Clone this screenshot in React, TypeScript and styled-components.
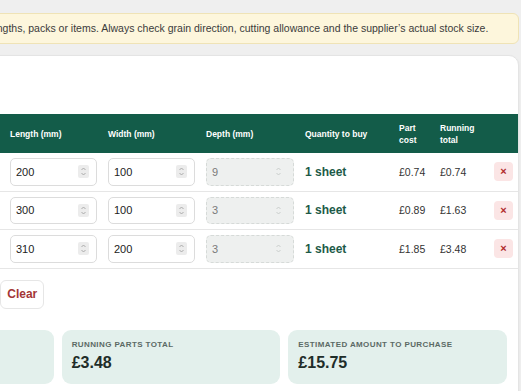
import React from 'react';
import styled, { createGlobalStyle } from 'styled-components';

const GlobalStyle = createGlobalStyle`
  html, body {
    margin: 0;
    padding: 0;
    background: #efefef;
  }
  body {
    font-family: "Liberation Sans", Arial, sans-serif;
    color: #333;
    overflow: hidden;
  }
`;

// the page is shown scrolled to the right, so the left part sits outside the window
const Viewport = styled.div`
  width: 100%;
  overflow: hidden;
`;

const Page = styled.div`
  width: 696px;
  padding: 13px 12px 24px;
  margin-left: -189px;
`;

const Notice = styled.div`
  height: 29px;
  line-height: 29px;
  padding: 0 12px 0 21px;
  background: #fdf6dc;
  border: 1px solid #efe3b6;
  border-radius: 6px;
  font-size: 10.5px;
  color: #3b3b3b;
  white-space: nowrap;
  margin-bottom: 11px;
`;

const Card = styled.section`
  background: #fff;
  border: 1px solid #e4e4e4;
  border-radius: 10px;
  box-shadow: 0 1px 3px rgba(0, 0, 0, 0.05);
  overflow: hidden;
`;

const CardHead = styled.header`
  box-sizing: border-box;
  height: 58px;
  padding: 16px 11px 0;
`;

const Title = styled.h2`
  margin: 0;
  font-size: 15px;
  color: #1f2d29;
`;

const Table = styled.table`
  width: 100%;
  border-collapse: collapse;
  table-layout: fixed;
`;

const Th = styled.th`
  height: 39px;
  padding: 0 8px;
  background: #135c49;
  color: #fff;
  font-size: 8.5px;
  font-weight: 700;
  line-height: 12px;
  text-align: left;
  vertical-align: middle;
`;

const Td = styled.td`
  padding: 5px 3px 5px 8px;
  border-bottom: 1px solid #e6e6e6;
  font-size: 10.5px;
  color: #333;
  vertical-align: middle;
`;

const PartName = styled.span`
  font-size: 11px;
  color: #333;
`;

const Field = styled.label<{ $locked?: boolean }>`
  display: flex;
  align-items: center;
  box-sizing: border-box;
  height: 27.5px;
  padding: 0 ${p => (p.$locked ? 9 : 7)}px 0 5px;
  border: 1px ${p => (p.$locked ? 'dashed #d6dad8' : 'solid #dcdcdc')};
  border-radius: 5px;
  background: ${p => (p.$locked ? '#eef0ef' : '#fff')};
`;

const FieldInput = styled.input<{ $locked?: boolean }>`
  flex: 1;
  min-width: 0;
  border: 0;
  padding: 0;
  background: transparent;
  font-family: inherit;
  font-size: 11px;
  color: ${p => (p.$locked ? '#7a7a7a' : '#222')};
  outline: none;
`;

const Qty = styled.span`
  font-size: 12px;
  font-weight: 700;
  color: #1d5a48;
`;

const RemoveButton = styled.button`
  display: flex;
  align-items: center;
  justify-content: center;
  width: 19px;
  height: 19px;
  padding: 0;
  border: 0;
  border-radius: 4px;
  background: #fbe5e5;
  color: #b02a2a;
  font-family: inherit;
  font-size: 11px;
  font-weight: 700;
  line-height: 1;
`;

const Actions = styled.div`
  display: flex;
  gap: 8px;
  padding: 11px 11px 0;
`;

const Button = styled.button<{ $variant?: 'primary' | 'plain' | 'danger' }>`
  height: 29px;
  padding: 0 ${p => (p.$variant === 'danger' ? 6 : 8)}px;
  border-radius: 6px;
  font-family: inherit;
  font-size: 12px;
  font-weight: 700;
  border: 1px solid ${p => (p.$variant === 'primary' ? '#135c49' : '#e6e6e6')};
  background: ${p => (p.$variant === 'primary' ? '#135c49' : '#fff')};
  color: ${p => (p.$variant === 'primary' ? '#fff' : p.$variant === 'danger' ? '#a33636' : '#1d5a48')};
`;

const Summary = styled.div`
  display: grid;
  grid-template-columns: repeat(3, 1fr);
  gap: 8px;
  padding: 21px 11px 16px;
`;

const Stat = styled.div`
  box-sizing: border-box;
  height: 54px;
  padding: 10px 10px 0;
  border-radius: 9px;
  background: #e3f0ec;
`;

const StatLabel = styled.div`
  font-size: 8px;
  font-weight: 700;
  letter-spacing: 0.4px;
  text-transform: uppercase;
  color: #5b6a65;
  line-height: 10px;
`;

const StatValue = styled.div`
  margin-top: 4px;
  font-size: 16px;
  font-weight: 700;
  line-height: 18px;
  color: #1f2d29;
`;

const Spinner: React.FC<{ faint?: boolean }> = ({ faint }) => (
  <svg width="11" height="13" viewBox="0 0 11 13">
    {!faint && <rect x="0" y="0" width="11" height="13" rx="2" fill="#ececec" />}
    <path
      d="M3.5 5 L5.5 3 L7.5 5 M3.5 8 L5.5 10 L7.5 8"
      fill="none"
      stroke={faint ? '#c4c8c6' : '#a3a3a3'}
      strokeWidth="0.9"
    />
  </svg>
);

interface Part {
  name: string;
  length: number;
  width: number;
  depth: number;
  qty: string;
  cost: string;
  running: string;
}

const parts: Part[] = [
  { name: 'Shelf', length: 200, width: 100, depth: 9, qty: '1 sheet', cost: '£0.74', running: '£0.74' },
  { name: 'Side panel', length: 300, width: 100, depth: 3, qty: '1 sheet', cost: '£0.89', running: '£1.63' },
  { name: 'Back', length: 310, width: 200, depth: 3, qty: '1 sheet', cost: '£1.85', running: '£3.48' }
];

const NumberField: React.FC<{ value: number; locked?: boolean }> = ({ value, locked }) => (
  <Field $locked={locked}>
    <FieldInput $locked={locked} defaultValue={value} readOnly={locked} inputMode="numeric" />
    <Spinner faint={locked} />
  </Field>
);

const App: React.FC = () => (
  <Viewport>
    <GlobalStyle />
    <Page>
      <Notice>
        Estimate only: suppliers sell in lengths, packs or items. Always check grain direction, cutting allowance and the
        supplier’s actual stock size.
      </Notice>
      <Card>
        <CardHead>
          <Title>Cut list</Title>
        </CardHead>
        <Table>
          <colgroup>
            <col style={{ width: 178 }} />
            <col style={{ width: 98 }} />
            <col style={{ width: 98 }} />
            <col style={{ width: 99 }} />
            <col style={{ width: 94 }} />
            <col style={{ width: 41 }} />
            <col style={{ width: 54 }} />
            <col />
          </colgroup>
          <thead>
            <tr>
              <Th>Part</Th>
              <Th>Length (mm)</Th>
              <Th>Width (mm)</Th>
              <Th>Depth (mm)</Th>
              <Th>Quantity to buy</Th>
              <Th>Part cost</Th>
              <Th>Running total</Th>
              <Th />
            </tr>
          </thead>
          <tbody>
            {parts.map(part => (
              <tr key={part.name}>
                <Td>
                  <PartName>{part.name}</PartName>
                </Td>
                <Td>
                  <NumberField value={part.length} />
                </Td>
                <Td>
                  <NumberField value={part.width} />
                </Td>
                <Td>
                  <NumberField value={part.depth} locked />
                </Td>
                <Td>
                  <Qty>{part.qty}</Qty>
                </Td>
                <Td>{part.cost}</Td>
                <Td>{part.running}</Td>
                <Td>
                  <RemoveButton aria-label={`Remove ${part.name}`}>×</RemoveButton>
                </Td>
              </tr>
            ))}
          </tbody>
        </Table>
        <Actions>
          <Button $variant="primary">+ Add part</Button>
          <Button $variant="plain">Copy last</Button>
          <Button $variant="danger">Clear</Button>
        </Actions>
        <Summary>
          <Stat>
            <StatLabel>Parts listed</StatLabel>
            <StatValue>3</StatValue>
          </Stat>
          <Stat>
            <StatLabel>Running parts total</StatLabel>
            <StatValue>£3.48</StatValue>
          </Stat>
          <Stat>
            <StatLabel>Estimated amount to purchase</StatLabel>
            <StatValue>£15.75</StatValue>
          </Stat>
        </Summary>
      </Card>
    </Page>
  </Viewport>
);

export default App;
